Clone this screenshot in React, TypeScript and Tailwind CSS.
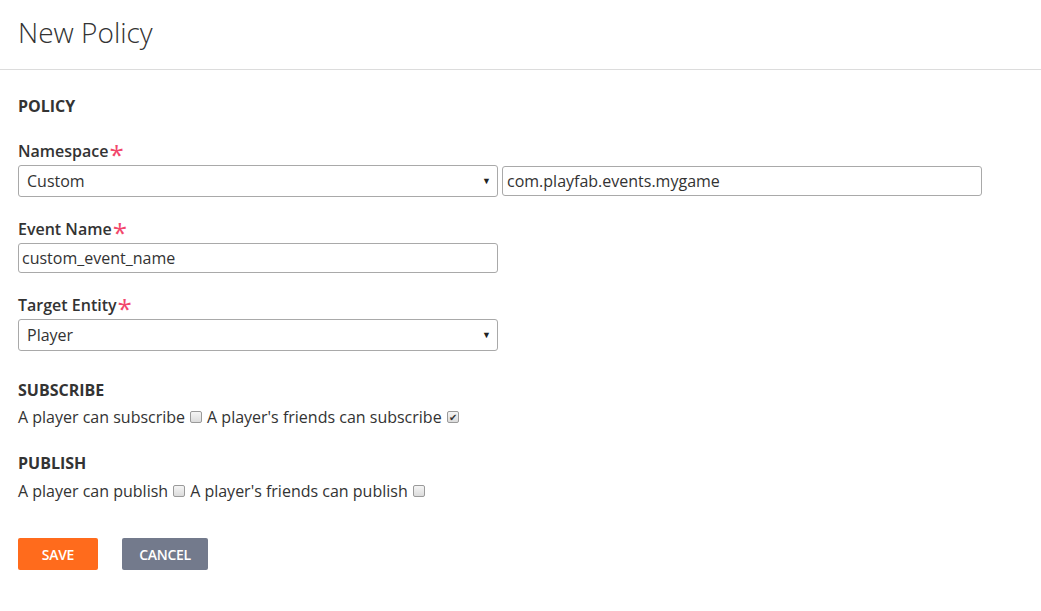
import React from 'react'

const font = { fontFamily: '"Open Sans", "Liberation Sans", sans-serif' }

const Required = () => (
  <span className="ml-[1px] inline-block h-[14px] text-[26px] font-normal leading-[14px] text-[#f2476c] relative top-[3px] overflow-visible">*</span>
)

const Label = ({ children }: { children: React.ReactNode }) => (
  <div className="flex items-center h-[22px] text-[16px] font-semibold text-[#333]">
    {children}
    <Required />
  </div>
)

const Select = ({ value, className = '' }: { value: string; className?: string }) => (
  <div className={`flex items-center justify-between h-[32px] border border-[#a9a9a9] rounded-[3px] pl-[8px] pr-[6px] text-[16px] text-[#333] bg-white ${className}`}>
    <span>{value}</span>
    <span className="text-[9px] text-[#222]">▼</span>
  </div>
)

const TextInput = ({ value, className = '' }: { value: string; className?: string }) => (
  <div className={`flex items-center h-[30px] border border-[#a9a9a9] rounded-[3px] px-[3px] text-[16px] text-[#333] bg-white ${className}`}>
    {value}
  </div>
)

const Check = ({ checked = false }: { checked?: boolean }) => (
  <span className="inline-flex items-center justify-center w-[12px] h-[12px] mx-[5px] border border-[#9a9a9a] rounded-[2px] bg-gradient-to-b from-[#f5f5f5] to-[#dcdcdc] align-middle">
    {checked && <span className="text-[10px] leading-none text-[#333]">✔</span>}
  </span>
)

const Section = ({ children }: { children: React.ReactNode }) => (
  <div className="text-[16px] font-bold text-[#333] h-[20px] flex items-center">{children}</div>
)

export default function App() {
  return (
    <div className="w-[1041px] min-h-[611px] bg-white" style={font}>
      <div className="h-[70px] border-b border-[#dcdcdc] px-[18px] pt-[12px]">
        <h1 className="text-[28px] font-light text-[#333] leading-[40px]">New Policy</h1>
      </div>
      <div className="px-[18px] pt-[26px]">
        <Section>POLICY</Section>

        <div className="mt-[24px]">
          <Label>Namespace</Label>
          <div className="flex gap-[4px] mt-[3px]">
            <Select value="Custom" className="w-[480px]" />
            <TextInput value="com.playfab.events.mygame" className="w-[480px] mt-[1px] px-[4px]" />
          </div>
        </div>

        <div className="mt-[21px]">
          <Label>Event Name</Label>
          <TextInput value="custom_event_name" className="w-[480px] mt-[3px]" />
        </div>

        <div className="mt-[21px]">
          <Label>Target Entity</Label>
          <Select value="Player" className="w-[480px] mt-[3px]" />
        </div>

        <div className="mt-[29px]">
          <Section>SUBSCRIBE</Section>
          <div className="mt-[6px] text-[16px] text-[#333] flex items-center h-[22px]">
            A player can subscribe<Check />A player's friends can subscribe<Check checked />
          </div>
        </div>

        <div className="mt-[25px]">
          <Section>PUBLISH</Section>
          <div className="mt-[7px] text-[16px] text-[#333] flex items-center h-[22px]">
            A player can publish<Check />A player's friends can publish<Check />
          </div>
        </div>

        <div className="flex gap-[24px] mt-[36px]">
          <button className="w-[80px] h-[32px] rounded-[2px] bg-[#ff6b1c] text-white text-[14px] font-semibold tracking-[-0.3px]">SAVE</button>
          <button className="w-[86px] h-[32px] rounded-[2px] bg-[#737a8c] text-white text-[14px] font-semibold tracking-[-0.3px]">CANCEL</button>
        </div>
      </div>
    </div>
  )
}
